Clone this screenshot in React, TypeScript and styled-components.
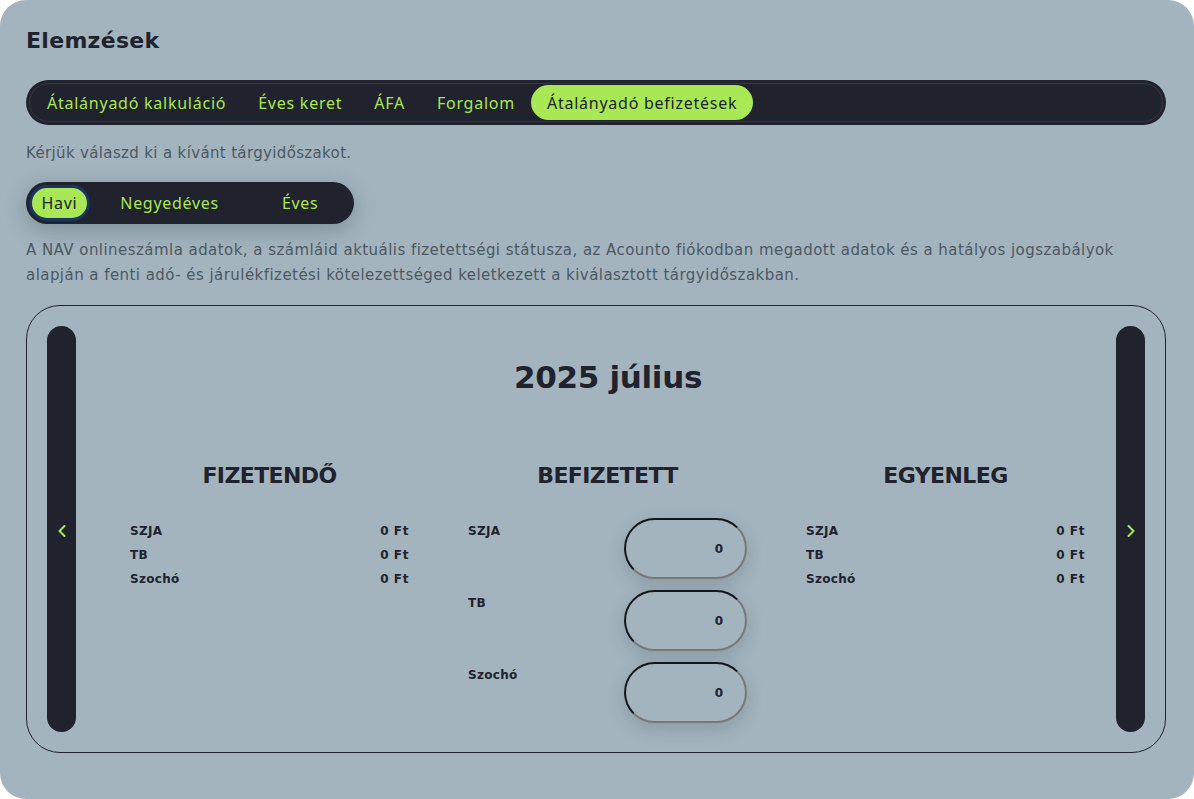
import React from "react";
import styled, { createGlobalStyle } from "styled-components";

const DARK = "#20222d";
const LIME = "#a9e855";
const BG = "#a3b4be";

const GlobalStyle = createGlobalStyle`
  html, body {
    margin: 0;
    padding: 0;
    background: #ffffff;
  }
  * {
    box-sizing: border-box;
  }
`;

const tabs = [
  "Átalányadó kalkuláció",
  "Éves keret",
  "ÁFA",
  "Forgalom",
  "Átalányadó befizetések",
];

const periods = [
  { label: "Havi", width: 61 },
  { label: "Negyedéves", width: 160 },
  { label: "Éves", width: 102 },
];

const taxes = ["SZJA", "TB", "Szochó"];

function Chevron({ dir }: { dir: "left" | "right" }) {
  return (
    <svg width="8" height="12" viewBox="0 0 8 12" fill="none">
      <polyline
        points={dir === "left" ? "6.5,1 1.5,6 6.5,11" : "1.5,1 6.5,6 1.5,11"}
        stroke={LIME}
        strokeWidth="2"
        strokeLinecap="round"
        strokeLinejoin="round"
      />
    </svg>
  );
}

function App() {
  return (
    <>
      <GlobalStyle />
      <Panel>
        <Title>Elemzések</Title>

        <TabBar>
          {tabs.map((t, i) => (
            <Tab key={t} $active={i === tabs.length - 1}>
              {t}
            </Tab>
          ))}
        </TabBar>

        <Hint>Kérjük válaszd ki a kívánt tárgyidőszakot.</Hint>

        <PeriodToggle>
          {periods.map((p, i) => (
            <PeriodOption key={p.label} $active={i === 0} $w={p.width}>
              {p.label}
            </PeriodOption>
          ))}
        </PeriodToggle>

        <Description>
          A NAV onlineszámla adatok, a számláid aktuális fizetettségi státusza,
          az Acounto fiókodban megadott adatok és a hatályos jogszabályok
          alapján a fenti adó- és járulékfizetési kötelezettséged keletkezett a
          kiválasztott tárgyidőszakban.
        </Description>

        <Card>
          <SideBar>
            <Chevron dir="left" />
          </SideBar>

          <Content>
            <MonthTitle>2025 július</MonthTitle>

            <Columns>
              <Column>
                <ColumnTitle>FIZETENDŐ</ColumnTitle>
                <RowList>
                  {taxes.map((t) => (
                    <Row key={t}>
                      <Label>{t}</Label>
                      <Amount>0 Ft</Amount>
                    </Row>
                  ))}
                </RowList>
              </Column>

              <Column>
                <ColumnTitle>BEFIZETETT</ColumnTitle>
                <InputList>
                  {taxes.map((t) => (
                    <InputRow key={t}>
                      <InputLabel>{t}</InputLabel>
                      <AmountInput defaultValue="0" />
                    </InputRow>
                  ))}
                </InputList>
              </Column>

              <Column>
                <ColumnTitle>EGYENLEG</ColumnTitle>
                <RowList>
                  {taxes.map((t) => (
                    <Row key={t}>
                      <Label>{t}</Label>
                      <Amount>0 Ft</Amount>
                    </Row>
                  ))}
                </RowList>
              </Column>
            </Columns>
          </Content>

          <SideBar>
            <Chevron dir="right" />
          </SideBar>
        </Card>
      </Panel>
    </>
  );
}

const Panel = styled.div`
  min-height: 100vh;
  background: ${BG};
  border-radius: 26px;
  padding: 27px 28px 45px 26px;
  display: flex;
  flex-direction: column;
  font-family: "DejaVu Sans", sans-serif;
`;

const Title = styled.h1`
  margin: 0;
  font-family: "DejaVu Sans", sans-serif;
  font-weight: 700;
  font-size: 22px;
  line-height: 28px;
  letter-spacing: 0.3px;
  color: ${DARK};
`;

const TabBar = styled.div`
  position: relative;
  margin-top: 25px;
  height: 45px;
  padding: 5px;
  display: flex;
  align-items: center;
  background: ${DARK};
  border-radius: 23px;

  &::before {
    content: "";
    position: absolute;
    inset: 3px;
    border-radius: 20px;
    border: 1px solid rgba(255, 255, 255, 0.1);
    pointer-events: none;
  }
`;

const Tab = styled.div<{ $active?: boolean }>`
  position: relative;
  height: 35px;
  padding: 0 16px;
  display: flex;
  align-items: center;
  border-radius: 18px;
  font-family: "Noto Sans", sans-serif;
  font-size: 16px;
  font-weight: 400;
  letter-spacing: 0.75px;
  white-space: nowrap;
  color: ${(p) => (p.$active ? DARK : LIME)};
  background: ${(p) => (p.$active ? LIME : "transparent")};
`;

const Hint = styled.p`
  margin: 17px 0 0;
  font-size: 15px;
  letter-spacing: 0.35px;
  line-height: 22px;
  color: #4d5862;
`;

const PeriodToggle = styled.div`
  margin-top: 18px;
  width: 328px;
  height: 42px;
  padding: 3px;
  display: flex;
  align-items: center;
  background: ${DARK};
  border-radius: 21px;
  box-shadow: 0 6px 22px rgba(20, 30, 40, 0.25);
`;

const PeriodOption = styled.div<{ $active?: boolean; $w: number }>`
  width: ${(p) => p.$w}px;
  height: 36px;
  display: flex;
  align-items: center;
  justify-content: center;
  border-radius: 18px;
  font-family: "Noto Sans", sans-serif;
  font-size: 16px;
  letter-spacing: 0.7px;
  color: ${(p) => (p.$active ? DARK : LIME)};
  background: ${(p) => (p.$active ? LIME : "transparent")};
  border: ${(p) => (p.$active ? "3px solid #1c3461" : "none")};
`;

const Description = styled.p`
  margin: 14px 0 0;
  font-size: 15px;
  letter-spacing: 0.45px;
  line-height: 25px;
  color: #4d5862;
`;

const Card = styled.div`
  margin-top: 17px;
  height: 448px;
  padding: 20px;
  display: flex;
  border: 1px solid ${DARK};
  border-radius: 34px;
`;

const SideBar = styled.div`
  flex: 0 0 29px;
  display: flex;
  align-items: center;
  justify-content: center;
  background: ${DARK};
  border-radius: 15px;
  padding-top: 4px;
`;

const Content = styled.div`
  flex: 1;
  padding: 31px 30px 0 54px;
  display: flex;
  flex-direction: column;
`;

const MonthTitle = styled.h2`
  margin: 0;
  text-align: center;
  font-family: "DejaVu Sans", sans-serif;
  font-weight: 700;
  font-size: 31px;
  line-height: 40px;
  letter-spacing: -0.3px;
  color: ${DARK};
`;

const Columns = styled.div`
  margin-top: 65px;
  display: grid;
  grid-template-columns: repeat(3, 279px);
  column-gap: 59px;
`;

const Column = styled.div`
  display: flex;
  flex-direction: column;
`;

const ColumnTitle = styled.h3`
  margin: 0 0 29px;
  text-align: center;
  font-family: "DejaVu Sans", sans-serif;
  font-weight: 700;
  font-size: 22px;
  line-height: 28px;
  letter-spacing: -0.6px;
  color: ${DARK};
`;

const RowList = styled.div`
  display: flex;
  flex-direction: column;
`;

const Row = styled.div`
  display: flex;
  justify-content: space-between;
  align-items: center;
  height: 24px;
`;

const Label = styled.span`
  font-family: "DejaVu Sans", sans-serif;
  font-weight: 700;
  font-size: 12px;
  letter-spacing: 0.3px;
  color: ${DARK};
`;

const Amount = styled(Label)`
  letter-spacing: 0.6px;
`;

const InputList = styled.div`
  display: flex;
  flex-direction: column;
  gap: 11px;
  margin-top: -1px;
`;

const InputRow = styled.div`
  display: flex;
  justify-content: space-between;
  align-items: flex-start;
`;

const InputLabel = styled(Label)`
  padding-top: 5px;
  line-height: 16px;
`;

const AmountInput = styled.input`
  width: 123px;
  height: 61px;
  padding: 0 22px 0 10px;
  border-radius: 31px;
  border: 2px solid;
  border-top-color: #15161b;
  border-left-color: #15161b;
  border-right-color: #787878;
  border-bottom-color: #787878;
  background: ${BG};
  text-align: right;
  font-family: "DejaVu Sans", sans-serif;
  font-weight: 700;
  font-size: 12px;
  color: ${DARK};
  outline: none;
  box-shadow: 0 6px 18px rgba(30, 45, 55, 0.18);
`;

export default App;
